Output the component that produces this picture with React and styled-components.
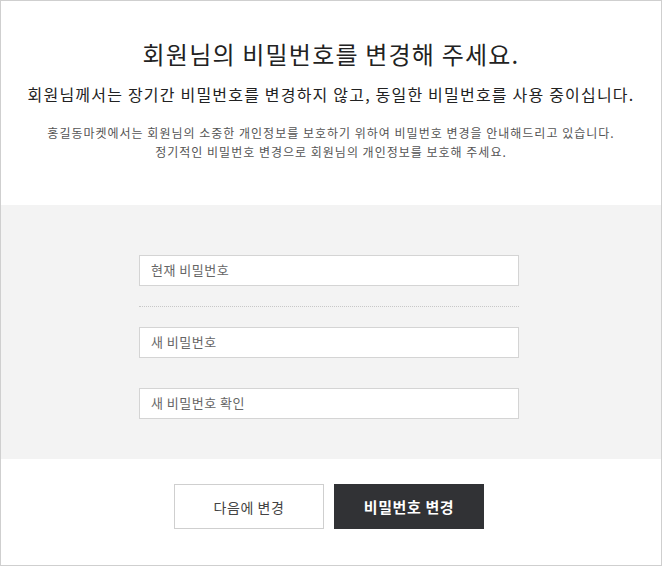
import React from 'react'
import styled, { createGlobalStyle } from 'styled-components'

const GlobalStyle = createGlobalStyle`
  html, body {
    margin: 0;
    padding: 0;
    background: #fff;
  }
  body {
    font-family: "Noto Sans CJK KR", "Noto Sans", sans-serif;
  }
  * { box-sizing: border-box; }
`

const Frame = styled.div`
  width: 662px;
  height: 566px;
  border: 1px solid #cfcfcf;
  background: #fff;
  display: flex;
  flex-direction: column;
`

const Header = styled.div`
  padding: 38px 0 44px;
  text-align: center;
`

const Title = styled.h1`
  margin: 0;
  font-size: 24px;
  line-height: 30px;
  font-weight: 400;
  letter-spacing: 1.2px;
  color: #222;
`

const Lead = styled.p`
  margin: 13px 0 0;
  font-size: 16px;
  line-height: 24px;
  letter-spacing: 1.2px;
  color: #222;
`

const Notice = styled.p`
  margin: 17px 0 0;
  font-size: 12px;
  line-height: 19px;
  letter-spacing: 1px;
  color: #555;
`

const FormArea = styled.div`
  background: #f3f3f3;
  padding: 50px 4px 40px 0;
  display: flex;
  flex-direction: column;
  align-items: center;
`

const Field = styled.input`
  width: 380px;
  height: 31px;
  border: 1px solid #d4d4d4;
  background: #fff;
  padding: 0 11px 2px;
  font-family: inherit;
  font-size: 13px;
  letter-spacing: 0.5px;
  color: #333;
  outline: none;
  margin-top: ${(p) => p.$gap || 0}px;

  &::placeholder {
    color: #666;
  }
`

const Divider = styled.hr`
  width: 380px;
  margin: 20px 0 0;
  border: 0;
  border-top: 1px dotted #c8c8c8;
  height: 0;
`

const Actions = styled.div`
  display: flex;
  justify-content: center;
  gap: 10px;
  padding: 25px 4px 0 0;
`

const Button = styled.button`
  width: 150px;
  height: 45px;
  font-family: inherit;
  font-size: ${(p) => (p.$primary ? '15px' : '14px')};
  font-weight: ${(p) => (p.$primary ? 700 : 400)};
  letter-spacing: 0.6px;
  color: ${(p) => (p.$primary ? '#fff' : '#444')};
  background: ${(p) => (p.$primary ? '#313235' : '#fff')};
  border: 1px solid ${(p) => (p.$primary ? '#313235' : '#cfcfcf')};
  cursor: pointer;
`

export default function App() {
  return (
    <>
      <GlobalStyle />
      <Frame>
        <Header>
          <Title>회원님의 비밀번호를 변경해 주세요.</Title>
          <Lead>회원님께서는 장기간 비밀번호를 변경하지 않고, 동일한 비밀번호를 사용 중이십니다.</Lead>
          <Notice>
            홍길동마켓에서는 회원님의 소중한 개인정보를 보호하기 위하여 비밀번호 변경을 안내해드리고 있습니다.
            <br />
            정기적인 비밀번호 변경으로 회원님의 개인정보를 보호해 주세요.
          </Notice>
        </Header>
        <FormArea>
          <Field type="password" placeholder="현재 비밀번호" />
          <Divider />
          <Field type="password" placeholder="새 비밀번호" $gap={20} />
          <Field type="password" placeholder="새 비밀번호 확인" $gap={30} />
        </FormArea>
        <Actions>
          <Button>다음에 변경</Button>
          <Button $primary>비밀번호 변경</Button>
        </Actions>
      </Frame>
    </>
  )
}
